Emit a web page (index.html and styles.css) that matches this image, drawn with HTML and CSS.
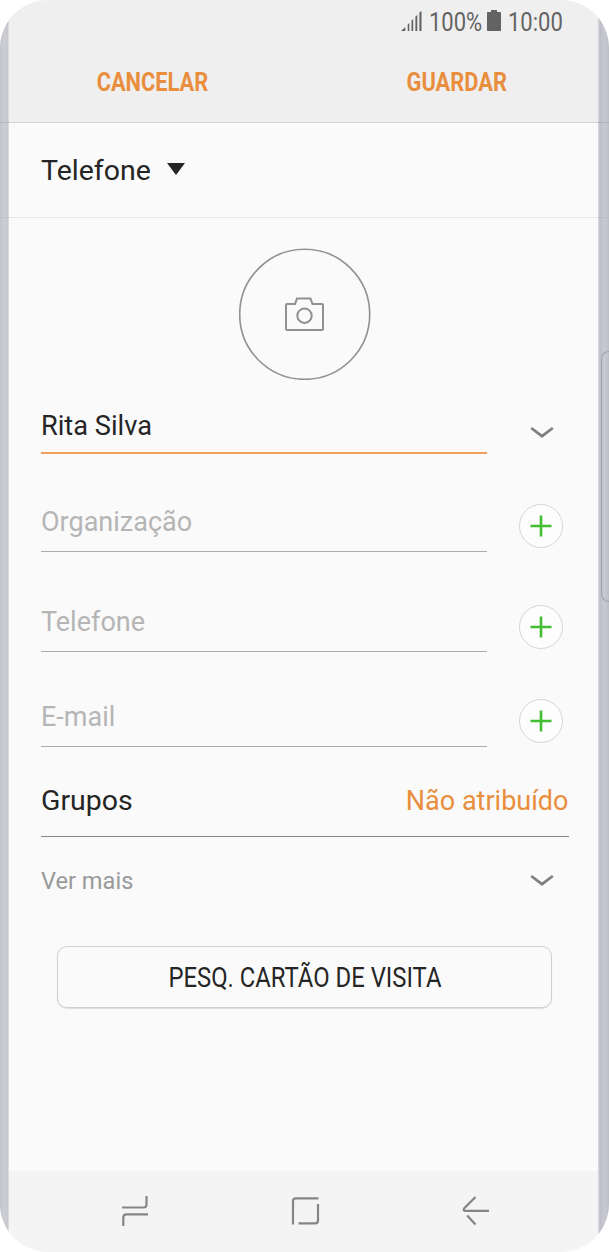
FILE: index.html
```html
<!DOCTYPE html>
<html lang="pt">
<head>
<meta charset="utf-8">
<title>Contacto</title>
<link rel="stylesheet" href="styles.css">
</head>
<body>
<div class="phone">
  <div class="rail rail-left"></div>
  <main class="screen">
    <header class="top">
      <div class="status">
        <svg class="signal" width="22" height="22" viewBox="0 0 22 22"><path d="M0 21L4.300 17V21zM6.700 14.500L8.300 13V21H6.700zM10.500 10.500L12.200 9V21H10.500zM14.400 6.500L16.300 5V21H14.400zM18.400 2.500L20.500 1V21H18.400z"/></svg>
        <span class="percent"><span class="narrow">100%</span></span>
        <svg class="battery" width="14" height="22" viewBox="0 0 14 22"><path d="M4 0h6v2h3.300q.7 0 .7.700V20.300q0 .7-.7.700H.7q-.7 0-.7-.7V2.700Q0 2 .7 2H4z"/></svg>
        <span class="clock"><span class="narrow">10:00</span></span>
      </div>
      <nav class="actions">
        <span class="action cancel">CANCELAR</span>
        <span class="action save">GUARDAR</span>
      </nav>
    </header>
    <div class="account">
      <span class="account-name">Telefone</span>
      <svg class="caret" width="18" height="12" viewBox="0 0 18 12"><path d="M0 0h18L9 12z"/></svg>
    </div>
    <div class="photo">
      <svg width="132" height="132" viewBox="0 0 132 132">
        <circle class="ring" cx="65.700" cy="66.300" r="65"/>
        <path d="M48 56H56L58 50.600H71.500L73.500 56H83Q84 56 84 57V81Q84 82 83 82H48Q47 82 47 81V57Q47 56 48 56z"/>
        <circle cx="65.500" cy="67.700" r="7.200"/>
      </svg>
    </div>
    <section class="row row-name">
      <div class="field active">Rita Silva</div>
      <svg class="chevron" width="24" height="14" viewBox="0 0 24 14"><path d="M1.200 2L12 10.200L22.800 2"/></svg>
    </section>
    <section class="row row-org">
      <div class="field">Organização</div>
      <span class="add"><svg width="22" height="22" viewBox="0 0 22 22"><path d="M11 .5v21M.5 11h21"/></svg></span>
    </section>
    <section class="row row-tel">
      <div class="field">Telefone</div>
      <span class="add"><svg width="22" height="22" viewBox="0 0 22 22"><path d="M11 .5v21M.5 11h21"/></svg></span>
    </section>
    <section class="row row-mail">
      <div class="field">E-mail</div>
      <span class="add"><svg width="22" height="22" viewBox="0 0 22 22"><path d="M11 .5v21M.5 11h21"/></svg></span>
    </section>
    <section class="groups">
      <span class="groups-label">Grupos</span>
      <span class="groups-value">Não atribuído</span>
    </section>
    <section class="more">
      <span>Ver mais</span>
      <svg class="chevron" width="24" height="14" viewBox="0 0 24 14"><path d="M1.200 2L12 10.200L22.800 2"/></svg>
    </section>
    <div class="card-button"><span class="card-label">PESQ. CARTÃO DE VISITA</span></div>
    <footer class="navbar">
      <svg width="28" height="30" viewBox="0 0 28 30"><path d="M1 11.500H22.500Q25.500 11.500 25.500 8.500V0M2.300 30V21.500Q2.300 18.300 5.500 18.300H27"/></svg>
      <svg width="30" height="30" viewBox="0 0 30 30"><path d="M2 28.500V5Q2 2.300 4.700 2.300H27.500M27 8V24.500Q27 27.300 24.200 27.300H7.500"/></svg>
      <svg width="28" height="30" viewBox="0 0 28 30"><path d="M13.500 1L2.300 12.200Q.8 14.800 3 14.800H27M5.200 19.500L13.500 28.500"/></svg>
    </footer>
  </main>
  <div class="rail rail-right"><div class="edge-handle"></div></div>
</div>
</body>
</html>
```

FILE: styles.css
```css
* { box-sizing: border-box; }
body { margin: 0; background: #fff; font-family: Roboto, sans-serif; color: #252525; }
svg { display: block; flex: none; }

.phone {
  display: grid;
  grid-template-columns: 9px 589px 11px;
  width: 609px;
  height: 1252px;
  border-radius: 48px;
  overflow: hidden;
}
.screen { display: flex; flex-direction: column; background: #fafafa; }

/* Side rails of the handset */
.rail-left {
  background:
    linear-gradient(#b5b5bc, #b5b5bc) 0 122px / 100% 1px no-repeat,
    linear-gradient(#c0c0c7, #c0c0c7) 0 217px / 100% 1px no-repeat,
    linear-gradient(90deg, #c2c3c9, #cdced4 45%, #c7c8ce 85%, #e6e6e9);
}
.rail-right {
  padding: 351px 0 0 3px;
  background:
    linear-gradient(#b0b0b9, #b0b0b9) 0 122px / 100% 1px no-repeat,
    linear-gradient(#bcbcc4, #bcbcc4) 0 217px / 100% 1px no-repeat,
    linear-gradient(90deg, #d9d9de, #bebfc8 20%, #c8c8d2 60%, #bdbec4);
}
.edge-handle {
  height: 251px;
  border: 1px solid #a2a2aa;
  border-right: 0;
  border-radius: 9px 0 0 9px;
}

/* Header */
.top { height: 123px; background: #efefef; border-bottom: 1px solid #d5d5d5; }
.status {
  display: flex;
  height: 43px;
  padding: 10px 0 0 392px;
  color: #636363;
  fill: #636363;
  font-size: 25px;
  line-height: 25px;
}
.percent { width: 53px; margin-left: 6px; white-space: nowrap; }
.battery { margin-left: 5px; }
.clock { width: 60px; margin-left: 7px; }
.narrow { display: inline-block; transform: scaleX(.88); transform-origin: 0 50%; }
.actions { display: grid; grid-template-columns: 287px 321px; height: 79px; }
.action {
  justify-self: center;
  color: #e98e3d;
  font-size: 26px;
  font-weight: 700;
  line-height: 78px;
  transform: scaleX(.84);
}

.account {
  display: flex;
  align-items: center;
  height: 95px;
  padding-left: 32px;
  border-bottom: 1px solid #e6e6e6;
  font-size: 28.500px;
}
.caret { margin: -2px 0 0 16px; fill: #252525; }

.photo {
  width: 132px;
  height: 132px;
  margin: 30px 0 0 230px;
  fill: none;
  stroke: #919191;
  stroke-width: 2;
}
.ring { stroke-width: 1.600; }

/* Form rows */
.row { display: flex; padding-left: 32px; }
.field {
  width: 446px;
  border-bottom: 1px solid #ababab;
  color: #b5b5b5;
  font-size: 27px;
  line-height: 37px;
}
.active { border-bottom: 2px solid #f0a05a; color: #252525; font-size: 27.200px; line-height: 34px; }
.row-name { height: 45px; margin-top: 29px; }
.row-org { height: 48px; margin-top: 50px; }
.row-tel { height: 48px; margin-top: 52px; }
.row-mail { height: 47px; margin-top: 48px; }
.row-mail .field { line-height: 35px; }
.chevron { fill: none; stroke: #808080; stroke-width: 2.800; }
.row-name .chevron { margin: 17px 0 0 43px; }
.add {
  display: grid;
  place-items: center;
  width: 44px;
  height: 44px;
  margin-left: 32px;
  border: 1px solid #d6d6d6;
  border-radius: 50%;
  background: #fdfdfd;
  fill: none;
  stroke: #43bd32;
  stroke-width: 2.600;
}
.row-tel .add { margin-top: 1px; }
.row-mail .add { margin-top: -1px; }
.groups {
  display: flex;
  justify-content: space-between;
  width: 527.500px;
  height: 90px;
  margin-left: 32px;
  padding-top: 37px;
  border-bottom: 1px solid #858585;
  font-size: 28.500px;
  line-height: 34px;
}
.groups-value { color: #e98e3d; font-size: 27px; }
.more {
  display: flex;
  justify-content: space-between;
  align-items: center;
  height: 88px;
  padding: 0 44px 0 32px;
  color: #999;
  font-size: 23.600px;
}
.card-button {
  display: flex;
  justify-content: center;
  align-items: center;
  width: 495px;
  height: 62px;
  margin: 21px 0 0 48px;
  padding-top: 2px;
  border: 1px solid #cfcfcf;
  border-radius: 10px;
  box-shadow: 0 1px 1px #dedede;
  font-size: 27.400px;
  white-space: nowrap;
}
.card-label { transform: scaleX(.87); }
.navbar {
  display: flex;
  justify-content: space-between;
  height: 81px;
  margin-top: auto;
  padding: 25px 108px 0 112px;
  background: #f4f4f4;
  fill: none;
  stroke: #858585;
  stroke-width: 2.200;
}
```
